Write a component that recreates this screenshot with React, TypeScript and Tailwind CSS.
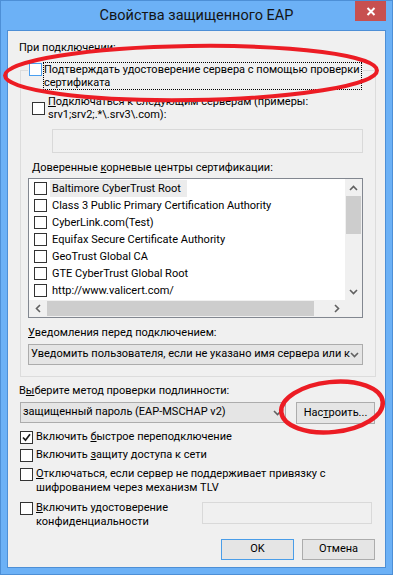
import type { ReactNode } from 'react'

function Check({ checked = false, focus = false }: { checked?: boolean; focus?: boolean }) {
  return (
    <span
      className={`flex h-[13px] w-[13px] shrink-0 items-center justify-center border bg-white ${
        focus ? 'border-[#4a9ff0]' : 'border-[#333333]'
      }`}
    >
      {checked && (
        <svg width="9" height="9" viewBox="0 0 9 9">
          <path d="M1 4.5 L3.5 7.2 L8 1.2" fill="none" stroke="#1a1a1a" strokeWidth="1.7" />
        </svg>
      )}
    </span>
  )
}

function Chevron({ dir }: { dir: 'up' | 'down' | 'left' | 'right' }) {
  if (dir === 'up' || dir === 'down') {
    return (
      <svg width="9" height="6" viewBox="0 0 9 6">
        <path
          d={dir === 'up' ? 'M1 5 L4.5 1.5 L8 5' : 'M1 1 L4.5 4.5 L8 1'}
          fill="none"
          stroke="#606060"
          strokeWidth="1.6"
        />
      </svg>
    )
  }
  return (
    <svg width="6" height="9" viewBox="0 0 6 9">
      <path
        d={dir === 'left' ? 'M5 1 L1.5 4.5 L5 8' : 'M1 1 L4.5 4.5 L1 8'}
        fill="none"
        stroke="#606060"
        strokeWidth="1.6"
      />
    </svg>
  )
}

function Button({ children, primary = false }: { children: ReactNode; primary?: boolean }) {
  return (
    <div
      className={`flex h-[21px] w-[73px] items-center justify-center border bg-[#e5e5e5] ${
        primary ? 'border-[#4a9de8]' : 'border-[#acacac]'
      }`}
    >
      {children}
    </div>
  )
}

const roots = [
  'Baltimore CyberTrust Root',
  'Class 3 Public Primary Certification Authority',
  'CyberLink.com(Test)',
  'Equifax Secure Certificate Authority',
  'GeoTrust Global CA',
  'GTE CyberTrust Global Root',
  'http://www.valicert.com/',
]

export default function App() {
  return (
    <div className="relative flex h-[575px] w-[393px] flex-col border border-[#4d8fd6] bg-[#6cb1f6] font-[Roboto,'Liberation_Sans',sans-serif] text-[11px] text-black">
      {/* заголовок окна */}
      <div className="flex h-[29px] shrink-0 pl-[37px]">
        <div className="flex-1 text-center text-[14.5px] leading-[29px] text-[#141414]">
          Свойства защищенного EAP
        </div>
        <div className="mr-[6px] flex h-[20px] w-[31px] items-center justify-center bg-[#c75050]">
          <svg width="10" height="9" viewBox="0 0 10 9">
            <path d="M1.5 1 L8.5 8 M8.5 1 L1.5 8" stroke="#fff" strokeWidth="2" />
          </svg>
        </div>
      </div>

      {/* клиентская область */}
      <div className="mx-[6px] flex h-[538px] flex-col border border-[#4d8fd6] bg-[#f0f0f0]">
        <div className="ml-[11px] mt-[10px] leading-[14px]">При подключении:</div>

        <div className="ml-[12px] mt-[15px] flex h-[307px] w-[356px] flex-col border border-[#dcdcdc]">
          <div className="-mt-[9px] ml-[7px] flex self-start bg-[#f0f0f0] px-[1px]">
            <span className="mt-[1px]">
              <Check focus />
            </span>
            <span className="ml-[1px] w-[319px] whitespace-nowrap border border-dotted border-black leading-[13px]">
              Подтверждать удостоверение сервера с помощью проверки
              <br />
              сертификата
            </span>
          </div>

          <div className="ml-[11px] mt-[5px] flex items-center">
            <Check />
            <span className="ml-[3px] whitespace-nowrap leading-[13px]">
              <u>П</u>одключаться к следующим серверам (примеры:
              <br />
              srv1;srv2;.*\.srv3\.com):
            </span>
          </div>

          <div className="ml-[31px] mt-[8px] h-[24px] w-[311px] border border-[#d9d9d9]" />

          <div className="ml-[11px] mt-[8px] leading-[14px]">
            Доверенные <u>к</u>орневые центры сертификации:
          </div>

          {/* список корневых центров */}
          <div className="ml-[7px] mt-[3px] flex h-[140px] w-[335px] flex-col border border-[#828790] bg-white">
            <div className="flex h-[121px]">
              <div className="flex-1 pt-[1px]">
                {roots.map((name, i) => (
                  <div key={name} className="flex h-[17px] items-center">
                    <span className="ml-[5px]">
                      <Check />
                    </span>
                    <span
                      className={`ml-[3px] whitespace-nowrap pl-[2px] pr-[6px] leading-[17px] ${
                        i === 0 ? 'bg-[#ececec]' : ''
                      }`}
                    >
                      {name}
                    </span>
                  </div>
                ))}
              </div>
              <div className="flex w-[17px] flex-col bg-[#f0f0f0]">
                <div className="flex h-[17px] items-center justify-center">
                  <Chevron dir="up" />
                </div>
                <div className="mx-auto h-[38px] w-[15px] bg-[#cdcdcd]" />
                <div className="flex-1" />
                <div className="flex h-[17px] items-center justify-center">
                  <Chevron dir="down" />
                </div>
              </div>
            </div>
            <div className="flex h-[17px] bg-[#f0f0f0]">
              <div className="flex w-[17px] items-center justify-center">
                <Chevron dir="left" />
              </div>
              <div className="my-[1px] ml-[1px] w-[267px] bg-[#cdcdcd]" />
              <div className="flex-1" />
              <div className="flex w-[17px] items-center justify-center">
                <Chevron dir="right" />
              </div>
              <div className="w-[17px]" />
            </div>
          </div>

          <div className="ml-[7px] mt-[8px] leading-[14px]">
            <u>У</u>ведомления перед подключением:
          </div>

          <div className="ml-[7px] mt-[4px] flex h-[21px] w-[335px] items-center border border-[#acacac] bg-[#e5e5e5]">
            <span className="ml-[2px] whitespace-nowrap">
              Уведомить пользователя, если не указано имя сервера или к
            </span>
            <span className="flex-1" />
            <span className="mr-[3px] flex">
              <Chevron dir="down" />
            </span>
          </div>
        </div>

        <div className="ml-[11px] mt-[7px] leading-[14px]">
          В<u>ы</u>берите метод проверки подлинности:
        </div>

        <div className="ml-[12px] mt-[4px] flex items-start">
          <div className="flex h-[21px] w-[266px] items-center border border-[#acacac] bg-[#e5e5e5]">
            <span className="ml-[2px] whitespace-nowrap">защищенный пароль (EAP-MSCHAP v2)</span>
            <span className="flex-1" />
            <span className="mr-[3px] flex">
              <Chevron dir="down" />
            </span>
          </div>
          <div className="ml-[10px] flex h-[22px] w-[79px] items-center justify-center border border-[#acacac] bg-[#e5e5e5]">
            Нас<u>т</u>роить...
          </div>
        </div>

        <div className="ml-[12px] mt-[6px] flex items-center leading-[14px]">
          <Check checked />
          <span className="ml-[3px]">
            Включить <u>б</u>ыстрое переподключение
          </span>
        </div>

        <div className="ml-[12px] mt-[4px] flex items-center leading-[14px]">
          <Check />
          <span className="ml-[3px]">
            Включить <u>з</u>ащиту доступа к сети
          </span>
        </div>

        <div className="ml-[12px] mt-[5px] flex items-start leading-[14px]">
          <span className="mt-[1px]">
            <Check />
          </span>
          <span className="ml-[3px] whitespace-nowrap">
            <u>О</u>тключаться, если сервер не поддерживает привязку с
            <br />
            шифрованием через механизм TLV
          </span>
        </div>

        <div className="ml-[12px] mr-[13px] mt-[6px] flex items-start leading-[14px]">
          <span className="mt-[1px]">
            <Check />
          </span>
          <span className="ml-[3px] flex-1 whitespace-nowrap">
            <u>В</u>ключить удостоверение
            <br />
            конфиденциальности
          </span>
          <div className="mt-[1px] h-[22px] w-[170px] border border-[#d9d9d9]" />
        </div>

        <div className="mr-[10px] mt-[10px] flex justify-end gap-[8px]">
          <Button primary>OK</Button>
          <Button>Отмена</Button>
        </div>
      </div>

      {/* пометки красным поверх окна */}
      <svg
        className="pointer-events-none absolute left-[-1px] top-[-1px]"
        width="393"
        height="575"
        viewBox="0 0 393 575"
      >
        <ellipse
          cx="191"
          cy="73"
          rx="186"
          ry="27"
          transform="rotate(-0.8 191 73)"
          fill="none"
          stroke="#ec1c24"
          strokeWidth="4"
        />
        <ellipse
          cx="332"
          cy="407"
          rx="51"
          ry="25"
          transform="rotate(-6 332 407)"
          fill="none"
          stroke="#ec1c24"
          strokeWidth="4.5"
        />
      </svg>
    </div>
  )
}
